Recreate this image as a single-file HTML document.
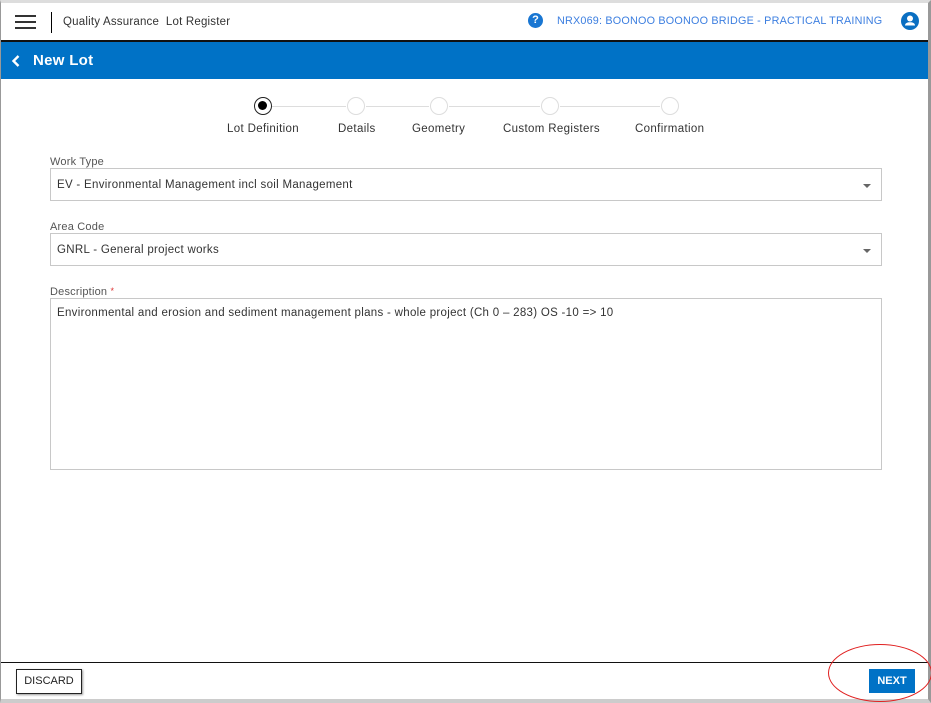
<!DOCTYPE html>
<html><head><style>
*{box-sizing:border-box;margin:0;padding:0}
body{width:931px;height:703px;background:#fff;font-family:"Liberation Sans",sans-serif;position:relative;overflow:hidden;color:#333}
.abs{position:absolute}
.lbl{font-size:11px;color:#555;letter-spacing:0.2px}
.box{position:absolute;left:50px;width:832px;border:1px solid #c8c8c8;background:#fff;font-size:11.5px;color:#333;padding-left:6px;letter-spacing:0.3px}
.caret{position:absolute;right:10px;top:15px;width:0;height:0;border-left:4px solid transparent;border-right:4px solid transparent;border-top:4px solid #666}
.step{position:absolute;top:97px;width:18px;height:18px;border-radius:50%;border:1px solid #ddd;background:#fff}
.sl{position:absolute;top:106px;height:1px;background:#ddd}
.st{position:absolute;top:123px;font-size:11.5px;color:#333;white-space:nowrap;letter-spacing:0.35px}
</style></head><body>
<div class="abs" style="left:0;top:0;width:931px;height:703px;border-left:1px solid #999;border-right:3px solid #999;border-bottom:4px solid #ccc;border-top:3px solid #ddd"></div>
<div class="abs" style="left:15px;top:15px;width:21px;height:2px;background:#333"></div>
<div class="abs" style="left:15px;top:21px;width:21px;height:2px;background:#333"></div>
<div class="abs" style="left:15px;top:27px;width:21px;height:2px;background:#333"></div>
<div class="abs" style="left:51px;top:12px;width:1px;height:21px;background:#000"></div>
<div class="abs" style="left:63px;top:16px;font-size:11.5px;color:#333;letter-spacing:0.2px">Quality Assurance&nbsp; Lot Register</div>
<div class="abs" style="left:528px;top:13px;width:15px;height:15px;border-radius:50%;background:#1976d2;color:#fff;font-size:11px;font-weight:bold;text-align:center;line-height:15px">?</div>
<div class="abs" style="left:557px;top:15px;font-size:10.8px;color:#3d7fe0;letter-spacing:0.2px">NRX069: BOONOO BOONOO BRIDGE - PRACTICAL TRAINING</div>
<svg class="abs" style="left:901px;top:12px" width="18" height="18" viewBox="0 0 18 18"><circle cx="9" cy="9" r="9" fill="#0a6fc2"/><circle cx="9" cy="6.5" r="3" fill="#fff"/><path d="M4 13.5c0-2.5 2.5-3.300 5-3.300s5 .8 5 3.300z" fill="#fff"/></svg>
<div class="abs" style="left:1px;top:40px;width:927px;height:2px;background:#111"></div>
<div class="abs" style="left:1px;top:42px;width:927px;height:37px;background:#0072c6"></div>
<svg class="abs" style="left:11px;top:54px" width="10" height="14" viewBox="0 0 10 14"><path d="M7.5 2L2.5 7l5 5" stroke="#fff" stroke-width="2.4" fill="none"/></svg>
<div class="abs" style="left:33px;top:52px;font-size:15px;font-weight:bold;color:#fff;letter-spacing:0.3px">New Lot</div>
<div class="sl" style="left:272px;width:74px"></div>
<div class="sl" style="left:366px;width:63px"></div>
<div class="sl" style="left:449px;width:91px"></div>
<div class="sl" style="left:560px;width:100px"></div>
<div class="step" style="left:254px;border:1.5px solid #222"><div style="position:absolute;left:3px;top:3px;width:9px;height:9px;border-radius:50%;background:#000"></div></div>
<div class="step" style="left:347px"></div>
<div class="step" style="left:430px"></div>
<div class="step" style="left:541px"></div>
<div class="step" style="left:661px"></div>
<div class="st" style="left:227px">Lot Definition</div>
<div class="st" style="left:338px">Details</div>
<div class="st" style="left:412px">Geometry</div>
<div class="st" style="left:503px">Custom Registers</div>
<div class="st" style="left:635px">Confirmation</div>
<div class="abs lbl" style="left:50px;top:156px">Work Type</div>
<div class="box" style="top:168px;height:33px;line-height:32px">EV - Environmental Management incl soil Management<div class="caret"></div></div>
<div class="abs lbl" style="left:50px;top:221px">Area Code</div>
<div class="box" style="top:233px;height:33px;line-height:32px">GNRL - General project works<div class="caret"></div></div>
<div class="abs lbl" style="left:50px;top:286px">Description <span style="color:#d33;font-size:9px;vertical-align:top">*</span></div>
<div class="box" style="top:298px;height:172px;padding-top:8px">Environmental and erosion and sediment management plans - whole project (Ch 0 – 283) OS -10 =&gt; 10</div>
<div class="abs" style="left:1px;top:662px;width:927px;height:1px;background:#111"></div>
<div class="abs" style="left:16px;top:669px;width:66px;height:25px;border:1px solid #222;box-shadow:1px 1px 2px #999;font-size:11px;text-align:center;line-height:23px;color:#222">DISCARD</div>
<div class="abs" style="left:869px;top:669px;width:46px;height:24px;background:#0072c6;color:#fff;font-size:11px;font-weight:bold;text-align:center;line-height:24px">NEXT</div>
<div class="abs" style="left:828px;top:644px;width:104px;height:58px;border:1.5px solid #e02020;border-radius:50%"></div>
</body></html>
